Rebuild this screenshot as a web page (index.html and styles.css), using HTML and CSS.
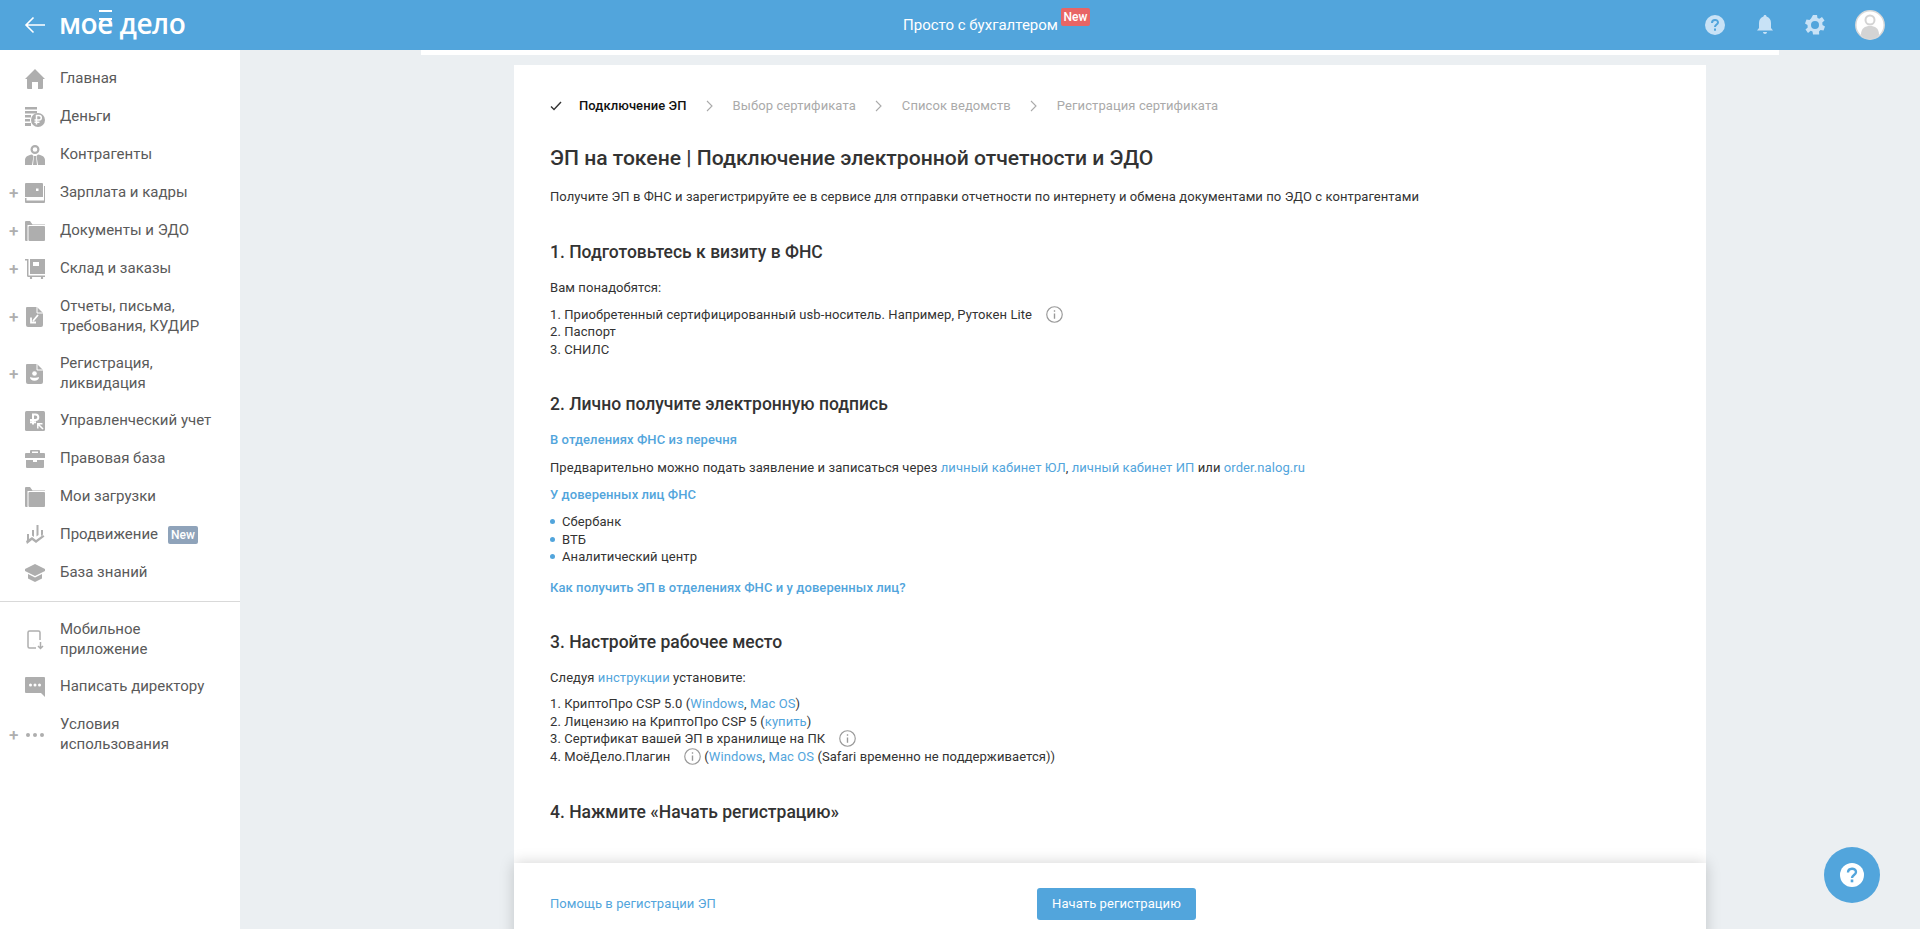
FILE: index.html
```html
<!DOCTYPE html>
<html lang="ru">
<head>
<meta charset="utf-8">
<title>Моё дело</title>
<link rel="stylesheet" href="styles.css">
</head>
<body>
<header class="top">
  <div class="top-left">
    <svg class="back" viewBox="0 0 22 18"><path d="M21 9H2M9.500 1.500 2 9l7.500 7.500" fill="none" stroke="#fff" stroke-width="1.600"/></svg>
    <span class="logo"><span class="logo-e">мое</span> дело</span>
  </div>
  <div class="top-center"><span>Просто с бухгалтером</span><span class="badge-red">New</span></div>
  <div class="top-right">
    <svg class="ti" viewBox="0 0 20 20"><circle cx="10" cy="10" r="10" fill="#c8e2f6"/><path d="M7 8c0-4 6-4 6-.5 0 2-3 2.200-3 4.500" fill="none" stroke="#52a5dc" stroke-width="2"/><rect x="9" y="13.500" width="2" height="2.200" fill="#52a5dc"/></svg>
    <svg class="ti" viewBox="0 0 20 20"><path d="M10 0c1 0 1.500.7 1.500 1.500C14.500 2.500 16 5 16 8v5l2 2.500H2L4 13V8c0-3 1.500-5.500 4.500-6.500C8.500.7 9 0 10 0z M8 17h4c0 1-1 2-2 2s-2-1-2-2z" fill="#c8e2f6"/></svg>
    <svg class="ti" viewBox="0 0 20 20"><path fill-rule="evenodd" fill="#c8e2f6" d="M8 0h4l.5 3 1.800.8L17 2l2.500 3.500-2.200 2 .2 2.500 2.500 1.500-1.500 4-3-.5-1.500 1.500.2 3H8l-.5-3-1.800-.8L3 18 .5 14.500l2.200-2-.2-2.500L0 8.500l1.500-4 3 .5L6 3.500zM10 6a4 4 0 1 0 0 8 4 4 0 0 0 0-8z"/></svg>
    <svg class="avatar" viewBox="0 0 30 30"><circle cx="15" cy="15" r="14.200" fill="#fff" stroke="#d8d8d8" stroke-width="1.500"/><circle cx="15" cy="10" r="4.500" fill="none" stroke="#d4d4d4" stroke-width="2"/><path d="M6 25c0-7 4-9 9-9s9 2 9 9c-2 2.500-5 4-9 4s-7-1.500-9-4z" fill="#d4d4d4"/></svg>
  </div>
</header>
<div class="layout">
  <nav class="side">
    <a class="item"><svg class="ic" viewBox="0 0 20 20"><path d="M10 0 20 10h-2v9a1 1 0 0 1-1 1h-4v-7H7v7H3a1 1 0 0 1-1-1v-9H0z"/></svg><span>Главная</span></a>
    <a class="item"><svg class="ic" viewBox="0 0 20 20"><path d="M0 0h12v2.500H0zM0 4h12v2.500H0zM0 8h6v2.500H0zM0 12h5v2.500H0zM0 16h6v3H0z"/><circle cx="13" cy="13" r="7"/><path d="M11.500 17.500v-9h2.500a2.300 2.300 0 0 1 0 4.600H9.500M9.500 15.300h5" fill="none" stroke="#fff" stroke-width="1.500"/></svg><span>Деньги</span></a>
    <a class="item"><svg class="ic" viewBox="0 0 20 20"><path fill-rule="evenodd" d="M10 0a4.500 4.500 0 1 1 0 9 4.500 4.500 0 0 1 0-9zm0 2.200a2.300 2.300 0 1 0 0 4.600 2.300 2.300 0 0 0 0-4.600z"/><path d="M0 20v-5c0-3 3-5 7-5.500l1.500 1.500L7 20zM20 20v-5c0-3-3-5-7-5.500L11.500 11l1.500 9zM9 11h2l1 9H8z"/></svg><span>Контрагенты</span></a>
    <a class="item"><i class="plus">+</i><svg class="ic" viewBox="0 0 20 20"><path fill-rule="evenodd" d="M1 0h16a1 1 0 0 1 1 1v13H0V1a1 1 0 0 1 1-1zm10 5.500v2.500h2.500V5.500z"/><path d="M19 3h1v16a1 1 0 0 1-1 1H1a1 1 0 0 1-1-1v-4h1.500v2.500H19z"/></svg><span>Зарплата и кадры</span></a>
    <a class="item"><i class="plus">+</i><svg class="ic" viewBox="0 0 20 20"><path d="M0 1a1 1 0 0 1 1-1h4l2.500 3.500H20V4H2.500v16H1a1 1 0 0 1-1-1z"/><rect x="3.500" y="5" width="16.500" height="15" rx="1"/></svg><span>Документы и ЭДО</span></a>
    <a class="item"><i class="plus">+</i><svg class="ic" viewBox="0 0 20 20"><path d="M0 0h3.500v16.500H20V18H3a1.500 1.500 0 0 1-1-1.500V1.500H0z"/><path fill-rule="evenodd" d="M5 0h15v15H5zM8 3v4h6V3z"/><circle cx="6" cy="19" r="1.200"/><circle cx="17" cy="19" r="1.200"/></svg><span>Склад и заказы</span></a>
    <a class="item"><i class="plus">+</i><svg class="ic" viewBox="0 0 20 20"><path d="M2 0h10l6 6v12a2 2 0 0 1-2 2H3a2 2 0 0 1-2-2V1a1 1 0 0 1 1-1z"/><path d="M12 0v6h6" fill="none" stroke="#fff" stroke-width="1"/><path d="M13 8 8 14M6 10.500V15.500H11" fill="none" stroke="#fff" stroke-width="1.800"/></svg><span>Отчеты, письма,<br>требования, КУДИР</span></a>
    <a class="item"><i class="plus">+</i><svg class="ic" viewBox="0 0 20 20"><path d="M2 0h10l6 6v12a2 2 0 0 1-2 2H3a2 2 0 0 1-2-2V1a1 1 0 0 1 1-1z"/><path d="M12 0v6h6" fill="none" stroke="#fff" stroke-width="1"/><circle cx="9.500" cy="9.500" r="2.300" fill="#fff"/><path d="M5 13c0 2.500 2 3.800 4.500 3.800S14 15.500 14 13c-1.500 1-7.500 1-9 0z" fill="#fff"/></svg><span>Регистрация,<br>ликвидация</span></a>
    <a class="item"><svg class="ic" viewBox="0 0 20 20"><rect width="20" height="20" rx="1.500"/><path d="M8 13.500V3.500h2.500a2.800 2.800 0 0 1 0 5.600H5M5 11.300h6" fill="none" stroke="#fff" stroke-width="2"/><path d="M18 18l-5-5M12.800 17.500V12.800H17.500" fill="none" stroke="#fff" stroke-width="1.500"/></svg><span>Управленческий учет</span></a>
    <a class="item"><svg class="ic" viewBox="0 0 20 20"><path fill-rule="evenodd" d="M6 1h8a1 1 0 0 1 1 1v2h4a1 1 0 0 1 1 1v4H0V5a1 1 0 0 1 1-1h4V2a1 1 0 0 1 1-1zm1 1.500V4h6V2.500zM1 11h7v2h4v-2h7v7a1 1 0 0 1-1 1H2a1 1 0 0 1-1-1z"/></svg><span>Правовая база</span></a>
    <a class="item"><svg class="ic" viewBox="0 0 20 20"><path d="M0 1a1 1 0 0 1 1-1h4l2.500 3.500H20V4H2.500v16H1a1 1 0 0 1-1-1z"/><rect x="3.500" y="5" width="16.500" height="15" rx="1"/></svg><span>Мои загрузки</span></a>
    <a class="item"><svg class="ic" viewBox="0 0 20 20"><path d="M2 9h2v5l-2 1.500zM7 5h2v7l-2-1.500zM11.500 0h2v10l-2 1.500zM16 5h2v4.500l-2 1.500zM1 16l6-4 4 3 7-5 1.500 1.500L11 18l-4-3-5 4z"/></svg><span>Продвижение</span><b class="badge-new">New</b></a>
    <a class="item"><svg class="ic" viewBox="0 0 20 20"><path d="M10 1 20 6v2l-10 5L0 8V6z"/><path d="M3 11l7 3.500 7-3.500v4.500L10 19l-7-3.500z"/></svg><span>База знаний</span></a>
    <hr class="sep">
    <a class="item"><svg class="ic ic-line" viewBox="0 0 20 20"><path d="M11 18H4.500A1.500 1.500 0 0 1 3 16.500v-14A1.500 1.500 0 0 1 4.500 1h9A1.500 1.500 0 0 1 15 2.500V10" /><path d="M15.500 12v6.500M13 16l2.500 2.500L18 16M8.500 14h.1"/></svg><span>Мобильное<br>приложение</span></a>
    <a class="item"><svg class="ic" viewBox="0 0 20 20"><path fill-rule="evenodd" d="M1 0h18a1 1 0 0 1 1 1v19l-4-4H1a1 1 0 0 1-1-1V1a1 1 0 0 1 1-1zm4.500 6.500a1.500 1.500 0 1 0 0 3 1.500 1.500 0 0 0 0-3zm4.500 0a1.500 1.500 0 1 0 0 3 1.500 1.500 0 0 0 0-3zm4.500 0a1.500 1.500 0 1 0 0 3 1.500 1.500 0 0 0 0-3z"/></svg><span>Написать директору</span></a>
    <a class="item"><i class="plus">+</i><svg class="ic" viewBox="0 0 20 20"><circle cx="3" cy="10" r="2"/><circle cx="10" cy="10" r="2"/><circle cx="17" cy="10" r="2"/></svg><span>Условия<br>использования</span></a>
  </nav>
  <main class="main">
    <div class="strip"></div>
    <section class="card">
      <ol class="steps">
        <li class="step on"><svg class="check" viewBox="0 0 12 10"><path d="M1 5.500 4 8.500 11 1" fill="none" stroke="#333" stroke-width="1.400"/></svg>Подключение ЭП</li>
        <li class="chev"><svg viewBox="0 0 7 12"><path d="m1 1 5 5-5 5" fill="none" stroke="#aaa" stroke-width="1.100"/></svg></li>
        <li class="step">Выбор сертификата</li>
        <li class="chev"><svg viewBox="0 0 7 12"><path d="m1 1 5 5-5 5" fill="none" stroke="#aaa" stroke-width="1.100"/></svg></li>
        <li class="step">Список ведомств</li>
        <li class="chev"><svg viewBox="0 0 7 12"><path d="m1 1 5 5-5 5" fill="none" stroke="#aaa" stroke-width="1.100"/></svg></li>
        <li class="step">Регистрация сертификата</li>
      </ol>
      <h1 class="title">ЭП на токене | Подключение электронной отчетности и ЭДО</h1>
      <p class="lead">Получите ЭП в ФНС и зарегистрируйте ее в сервисе для отправки отчетности по интернету и обмена документами по ЭДО с контрагентами</p>

      <h2 class="h">1. Подготовьтесь к визиту в ФНС</h2>
      <p class="need">Вам понадобятся:</p>
      <div class="list list-a">
        <div>1. Приобретенный сертифицированный usb-носитель. Например, Рутокен Lite<svg class="info" viewBox="0 0 16 16"><circle cx="8" cy="8" r="7.300" fill="none" stroke="#999" stroke-width="1.100"/><path d="M8 7v5M8 4v1.500" stroke="#999" stroke-width="1.300"/></svg></div>
        <div>2. Паспорт</div>
        <div>3. СНИЛС</div>
      </div>

      <h2 class="h">2. Лично получите электронную подпись</h2>
      <a class="sub sub1">В отделениях ФНС из перечня</a>
      <p class="pre">Предварительно можно подать заявление и записаться через <a>личный кабинет ЮЛ</a>, <a>личный кабинет ИП</a> или <a>order.nalog.ru</a></p>
      <a class="sub sub2">У доверенных лиц ФНС</a>
      <ul class="bul">
        <li>Сбербанк</li>
        <li>ВТБ</li>
        <li>Аналитический центр</li>
      </ul>
      <a class="sub sub3">Как получить ЭП в отделениях ФНС и у доверенных лиц?</a>

      <h2 class="h">3. Настройте рабочее место</h2>
      <p class="need">Следуя <a>инструкции</a> установите:</p>
      <div class="list">
        <div>1. КриптоПро CSP 5.0 (<a>Windows</a>, <a>Mac OS</a>)</div>
        <div>2. Лицензию на КриптоПро CSP 5 (<a>купить</a>)</div>
        <div>3. Сертификат вашей ЭП в хранилище на ПК<svg class="info" viewBox="0 0 16 16"><circle cx="8" cy="8" r="7.300" fill="none" stroke="#999" stroke-width="1.100"/><path d="M8 7v5M8 4v1.500" stroke="#999" stroke-width="1.300"/></svg></div>
        <div>4. МоёДело.Плагин<svg class="info info2" viewBox="0 0 16 16"><circle cx="8" cy="8" r="7.300" fill="none" stroke="#999" stroke-width="1.100"/><path d="M8 7v5M8 4v1.500" stroke="#999" stroke-width="1.300"/></svg>(<a>Windows</a>, <a>Mac OS</a> (Safari временно не поддерживается))</div>
      </div>

      <h2 class="h h-last">4. Нажмите «Начать регистрацию»</h2>
    </section>
    <footer class="foot">
      <a class="help">Помощь в регистрации ЭП</a>
      <button class="start" type="button">Начать регистрацию</button>
    </footer>
    <button class="fab" type="button" aria-label="Помощь"><svg viewBox="0 0 24 24"><circle cx="12" cy="12" r="12" fill="#fff"/><path d="M8 9.500C8 4.500 16 4.500 16 9c0 3-4 3-4 6" fill="none" stroke="#52a5dc" stroke-width="2.400"/><rect x="10.700" y="16.500" width="2.600" height="2.800" fill="#52a5dc"/></svg></button>
  </main>
</div>
</body>
</html>
```
FILE: styles.css
```css
* { box-sizing: border-box; }
html, body { margin: 0; height: 100%; overflow: hidden; }
body { font-family: Roboto, "Noto Sans", sans-serif; color: #333; background: #ebeff2; }
a { color: #52a5dc; text-decoration: none; }

.top { height: 50px; background: #52a5dc; display: grid; grid-template-columns: 1fr auto 1fr; align-items: center; color: #fff; }
.top-left { display: flex; align-items: center; padding-left: 24px; }
.back { width: 22px; height: 18px; }
.logo { margin-left: 13px; font-family: "Open Sans", Roboto, sans-serif; font-size: 28px; font-weight: 600; line-height: 30px; letter-spacing: -.5px; color: #fff; position: relative; top: -2px; }
.logo-e { position: relative; }
.logo-e::after { content: ""; position: absolute; right: 1px; top: 6px; width: 13px; height: 6px; border-top: 2px solid #fff; border-bottom: 2px solid #fff; }
.top-center { display: flex; align-items: flex-start; font-size: 15px; line-height: 20px; margin-left: 73px; }
.badge-red { background: #e86565; color: #fff; font-size: 12px; font-weight: 500; line-height: 18px; height: 18px; width: 29px; text-align: center; border-radius: 2px; margin: -7px 0 0 3px; }
.top-right { display: flex; justify-content: flex-end; align-items: center; gap: 30px; padding-right: 35px; }
.ti { width: 20px; height: 20px; }
.avatar { width: 30px; height: 30px; }

.layout { display: flex; height: 879px; }
.side { width: 240px; flex: none; background: #fff; padding-top: 10px; }
.item { display: flex; align-items: center; min-height: 38px; padding: 9px 0 9px 25px; position: relative; color: #5a5a5a; font-size: 15px; line-height: 19.500px; }
.ic { width: 20px; height: 20px; flex: none; margin-right: 15px; fill: #aeaeae; }
.ic-line { fill: none; stroke: #aeaeae; stroke-width: 1.500; }
.plus { position: absolute; left: 9px; top: 50%; margin-top: -10px; font-style: normal; font-size: 17px; font-weight: 500; line-height: 20px; color: #aeaeae; }
.badge-new { background: #8fa3ba; color: #fff; font-size: 12px; font-weight: 500; line-height: 18px; height: 18px; width: 30px; text-align: center; border-radius: 2px; margin-left: 10px; }
.sep { margin: 9px 0 9px; border: 0; border-top: 1px solid #d9d9d9; }

.main { flex: 1; position: relative; min-width: 0; overflow: hidden; }
.strip { height: 5px; margin: 0 141px 0 181px; background: #fff; }
.card { width: 1192px; margin: 10px 0 0 274px; height: 814px; background: #fff; padding: 32px 36px 0; font-size: 13px; line-height: 17.550px; letter-spacing: .08px; }
.steps { display: flex; align-items: center; list-style: none; margin: 0; padding: 0; line-height: 18px; color: #aaa; height: 18px; letter-spacing: .09px; }
.step.on { color: #111; font-weight: 500; display: flex; align-items: center; }
.check { width: 12px; height: 10px; margin-right: 17px; }
.chev { width: 46px; display: flex; justify-content: center; }
.chev svg { width: 7px; height: 12px; }
.title { margin: 29px 0 0; font-size: 21.100px; line-height: 28px; font-weight: 500; letter-spacing: 0; color: #333; }
.lead { margin: 16px 0 0; }
.h { margin: 35px 0 0; font-size: 17.500px; line-height: 22px; font-weight: 500; letter-spacing: 0; color: #333; }
.h-last { margin-top: 36px; }
.need { margin: 16px 0 0; }
.list { margin-top: 8.500px; }
.list-a { margin-top: 9.500px; }
.info { width: 17px; height: 17px; margin-left: 14px; vertical-align: -4px; }
.info2 { margin-right: 3px; }
.sub { display: block; font-weight: 500; }
.sub1 { margin-top: 16px; }
.pre { margin: 10.500px 0 0; }
.sub2 { margin-top: 9.500px; }
.bul { list-style: none; margin: 9.500px 0 0; padding: 0; }
.bul li { padding-left: 12px; position: relative; }
.bul li::before { content: ""; position: absolute; left: 0; top: 6px; width: 5px; height: 5px; border-radius: 50%; background: #52a5dc; }
.sub3 { margin-top: 12.500px; }

.foot { position: absolute; left: 274px; top: 813px; width: 1192px; height: 80px; background: #fff; box-shadow: 0 0 14px rgba(0,0,0,.18); display: flex; align-items: flex-start; padding: 0 36px; }
.help { width: 487px; font-size: 13px; line-height: 17.550px; letter-spacing: .08px; margin-top: 32px; }
.start { margin: 25px 0 0; width: 159px; height: 32px; background: #52a5dc; color: #fff; border: 0; border-radius: 3px; font: 13px/32px Roboto, sans-serif; letter-spacing: .08px; padding: 0; }
.fab { position: absolute; right: 40px; top: 797px; width: 56px; height: 56px; border-radius: 50%; background: #52a5dc; border: 0; padding: 16px; display: flex; }
.fab svg { width: 24px; height: 24px; }
```
